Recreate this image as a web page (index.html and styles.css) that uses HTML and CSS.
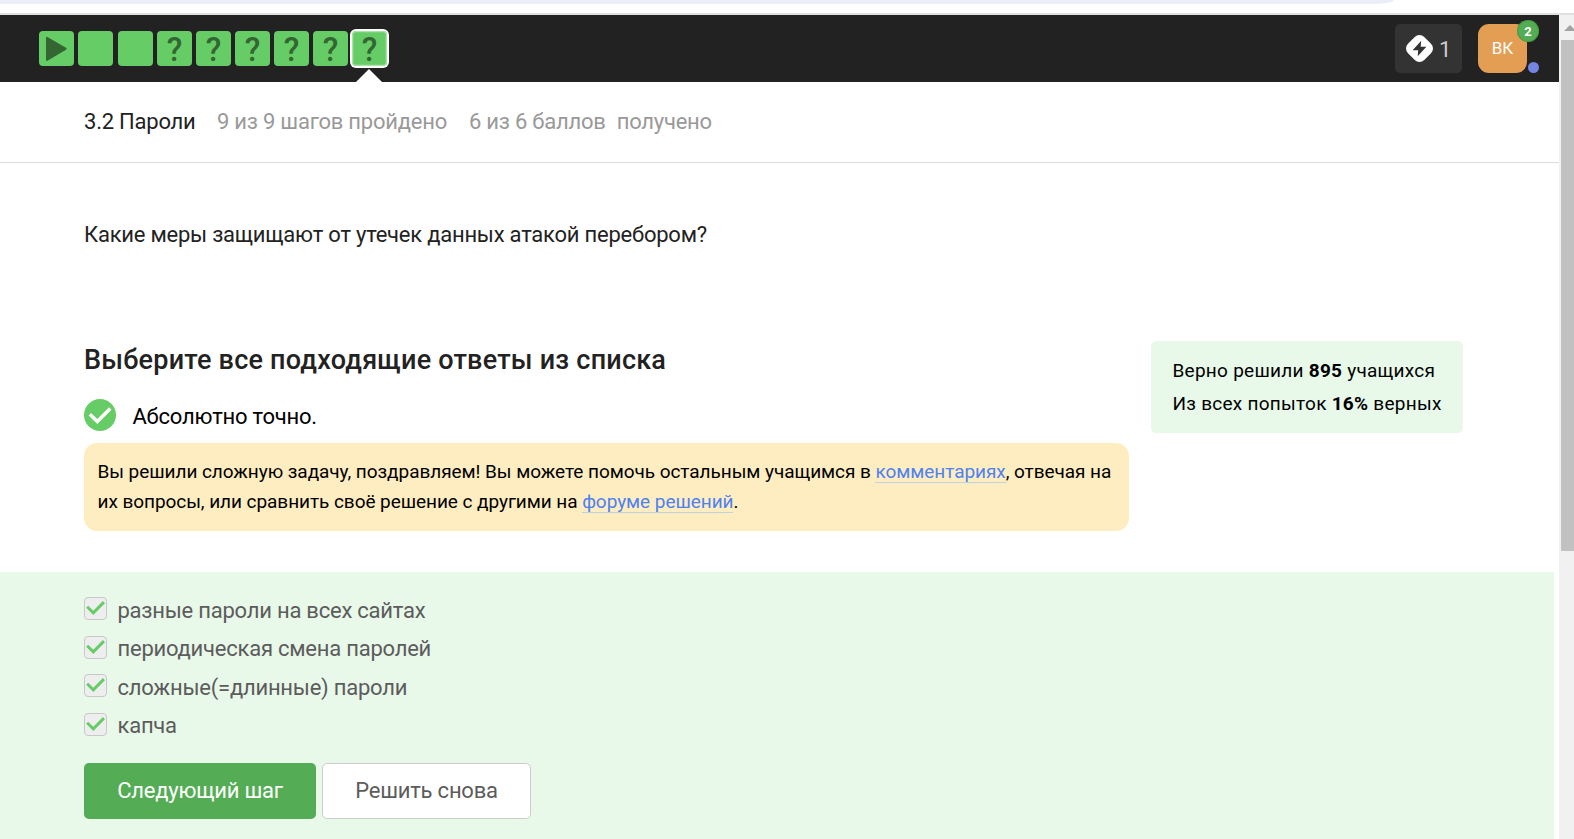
FILE: index.html
```html
<!DOCTYPE html>
<html lang="ru">
<head>
<meta charset="utf-8">
<title>3.2 Пароли</title>
<link rel="stylesheet" href="styles.css">
</head>
<body>
<svg class="defs" width="0" height="0" aria-hidden="true">
  <symbol id="tick" viewBox="0 0 24 24"><path d="M3.3 11.3 9.7 17.6 20.8 6.4" fill="none" stroke="currentColor" stroke-width="3"/></symbol>
</svg>
<div class="chrome"><div class="toolbar"></div></div>
<div class="viewport">
  <div class="page">
    <header class="topbar">
      <nav class="steps">
        <a class="step"><svg class="play" viewBox="0 0 35 35"><path d="M7 6.8Q7 5.3 8.4 6.1L27 16.8Q28.3 17.8 27 18.8L8.4 29.8Q7 30.6 7 29Z"/></svg></a>
        <a class="step"></a>
        <a class="step text"></a>
        <a class="step"><span>?</span></a>
        <a class="step"><span>?</span></a>
        <a class="step"><span>?</span></a>
        <a class="step"><span>?</span></a>
        <a class="step"><span>?</span></a>
        <a class="step active"><span>?</span></a>
      </nav>
      <div class="streak">
        <svg viewBox="0 0 27 27"><rect x="2" y="2" width="23" height="23" rx="6.7" transform="rotate(45 13.5 13.5)" fill="#fff"/><path d="M15.2 5.8 6.6 15.3H12.2L11.7 21.2 20.4 11.8H14.7Z" fill="#333"/></svg>
        <span>1</span>
      </div>
      <div class="avatar">ВК<span class="badge">2</span><span class="dot"></span></div>
    </header>
    <div class="lesson">
      <span class="title">3.2 Пароли</span>
      <span class="passed">9 из 9 шагов пройдено</span>
      <span class="points">6 из 6 баллов</span>
      <span class="got">получено</span>
    </div>
    <p class="question">Какие меры защищают от утечек данных атакой перебором?</p>
    <section class="task">
      <div class="result">
        <h2>Выберите все подходящие ответы из списка</h2>
        <div class="verdict"><span class="ok"><svg><use href="#tick"/></svg></span><span>Абсолютно точно.</span></div>
        <div class="note">Вы решили сложную задачу, поздравляем! Вы можете помочь остальным учащимся в <a>комментариях</a>, отвечая на<br>их вопросы, или сравнить своё решение с другими на <a>форуме решений</a>.</div>
      </div>
      <aside class="stats">Верно решили <b>895</b> учащихся<br>Из всех попыток <b>16%</b> верных</aside>
    </section>
    <section class="answers">
      <label class="option"><span class="box"><svg><use href="#tick"/></svg></span><span>разные пароли на всех сайтах</span></label>
      <label class="option"><span class="box"><svg><use href="#tick"/></svg></span><span>периодическая смена паролей</span></label>
      <label class="option"><span class="box"><svg><use href="#tick"/></svg></span><span>сложные(=длинные) пароли</span></label>
      <label class="option"><span class="box"><svg><use href="#tick"/></svg></span><span>капча</span></label>
      <div class="buttons"><button class="btn primary">Следующий шаг</button><button class="btn">Решить снова</button></div>
    </section>
  </div>
  <div class="scrollbar"><div class="up"></div><div class="thumb"></div></div>
</div>
</body>
</html>
```
FILE: styles.css
```css
* { box-sizing: border-box; }
body { margin: 0; width: 1574px; height: 839px; overflow: hidden; background: #fff; font-family: Roboto, "Liberation Sans", sans-serif; font-size: 22px; letter-spacing: -.23px; color: #222; }
.defs { display: block; }
.chrome { height: 15px; border-bottom: 2px solid #dfe1e0; overflow: hidden; }
.toolbar { width: 1394px; height: 4px; background: #ebeef8; border-bottom-right-radius: 20px 4px; }
.viewport { display: flex; height: 824px; }
.page { width: 1559px; display: flex; flex-direction: column; }
.topbar { height: 67px; flex: none; background: #222; display: flex; align-items: flex-start; padding-left: 39px; }
.steps { display: flex; gap: 4px; padding-top: 16px; flex: 1; }
.step { position: relative; width: 35px; height: 35px; border-radius: 4px; background: #66cc66; color: #336633; font-weight: 500; font-size: 34px; line-height: 36px; text-align: center; letter-spacing: 0; }
.step span { display: block; transform: scaleX(.94); }
.text { margin-left: 1px; }
.play { display: block; width: 35px; height: 35px; fill: #336633; }
.active { box-shadow: inset 0 0 0 1.3px #a8e2a8, 0 0 0 2px #fff; }
.active::after { content: ""; position: absolute; left: 4px; top: 38px; border: 13px solid transparent; border-top: 0; border-bottom-color: #fff; }
.streak { width: 67px; height: 49px; margin: 9px 16px 0 0; padding-left: 11px; border-radius: 5px; background: #333; display: flex; align-items: center; gap: 6px; color: #ccc; }
.streak svg { width: 27px; height: 27px; }
.streak span { padding-top: 2px; }
.avatar { position: relative; width: 49px; height: 49px; margin: 9px 32px 0 0; border-radius: 11px; background: #e39e54; color: #fff; font-size: 17px; line-height: 49px; text-align: center; letter-spacing: 0; }
.badge { position: absolute; left: 39px; top: -4px; width: 22px; height: 22px; border-radius: 50%; background: #54ad54; box-shadow: inset 0 0 2px #238823; font-size: 13px; font-weight: 700; line-height: 23px; }
.dot { position: absolute; left: 50px; top: 38px; width: 11px; height: 11px; border-radius: 50%; background: #7484e2; }
.lesson { height: 81px; flex: none; border-bottom: 1px solid #dcdcdc; padding: 0 0 2px 84px; display: flex; align-items: center; color: #999; white-space: nowrap; }
.title { color: #222; margin-right: 21.5px; }
.passed { margin-right: 22px; }
.points { margin-right: 11px; }
.question { margin: 55px 0 0 84px; line-height: 34px; }
.task { display: flex; margin: 89px 0 0 84px; height: 231px; }
.result { width: 1045px; margin-right: 22px; }
h2 { margin: 0; font-size: 27px; font-weight: 500; line-height: 38px; letter-spacing: .22px; white-space: nowrap; }
.verdict { display: flex; align-items: center; gap: 16.5px; height: 32px; margin: 20px 0 12px; color: #000; }
.verdict > span:last-child { padding-top: 3px; }
.ok { display: grid; place-items: center; width: 32px; height: 32px; border-radius: 50%; background: #66cc66; color: #fff; }
.ok svg { width: 28px; height: 28px; }
.note { height: 88px; padding: 14px 13.5px; border-radius: 13px; background: #ffedc2; color: #000; font-size: 19px; letter-spacing: -.06px; line-height: 30px; white-space: nowrap; }
.note a { color: #4d82f0; box-shadow: inset 0 -1px #c0d2dc; }
.stats { width: 312px; height: 92px; padding: 13px 21.5px; border-radius: 5px; background: #e8f8e9; color: #000; font-size: 19px; letter-spacing: .26px; line-height: 33px; white-space: nowrap; }
.stats b { font-weight: 700; }
.answers { width: 1554px; flex: 1; background: #e8f8e9; padding: 25px 0 0 84px; }
.option { display: flex; height: 38.6px; gap: 10.5px; color: #5c5c5c; line-height: 26px; }
.option:nth-child(odd) > span:last-child { padding-top: 1px; }
.box { width: 23px; height: 23px; border: 1px solid #c9c9c9; border-radius: 4px; background: #eee; color: #66cc66; }
.box svg { display: block; width: 23px; height: 23px; margin: -2px 0 0 -1px; }
.buttons { display: flex; gap: 6px; margin-top: 12px; }
.btn { width: 209px; height: 56px; border: 1px solid #ccc; border-radius: 5px; background: #fff; color: #5c5c5c; font: 400 22px Roboto, sans-serif; letter-spacing: -.21px; padding: 0 0 2px; white-space: nowrap; }
.primary { width: 232px; border: 0; background: #54ad54; color: #fff; }
.scrollbar { width: 15px; background: #f1f1f1; padding-left: 2px; }
.up { height: 25px; padding: 10px 0 0 3px; overflow: hidden; }
.up::before { content: ""; display: block; width: 0; border: 6px solid transparent; border-top: 0; border-bottom-color: #a3a3a3; }
.thumb { height: 511px; background: #c1c1c1; }
```
